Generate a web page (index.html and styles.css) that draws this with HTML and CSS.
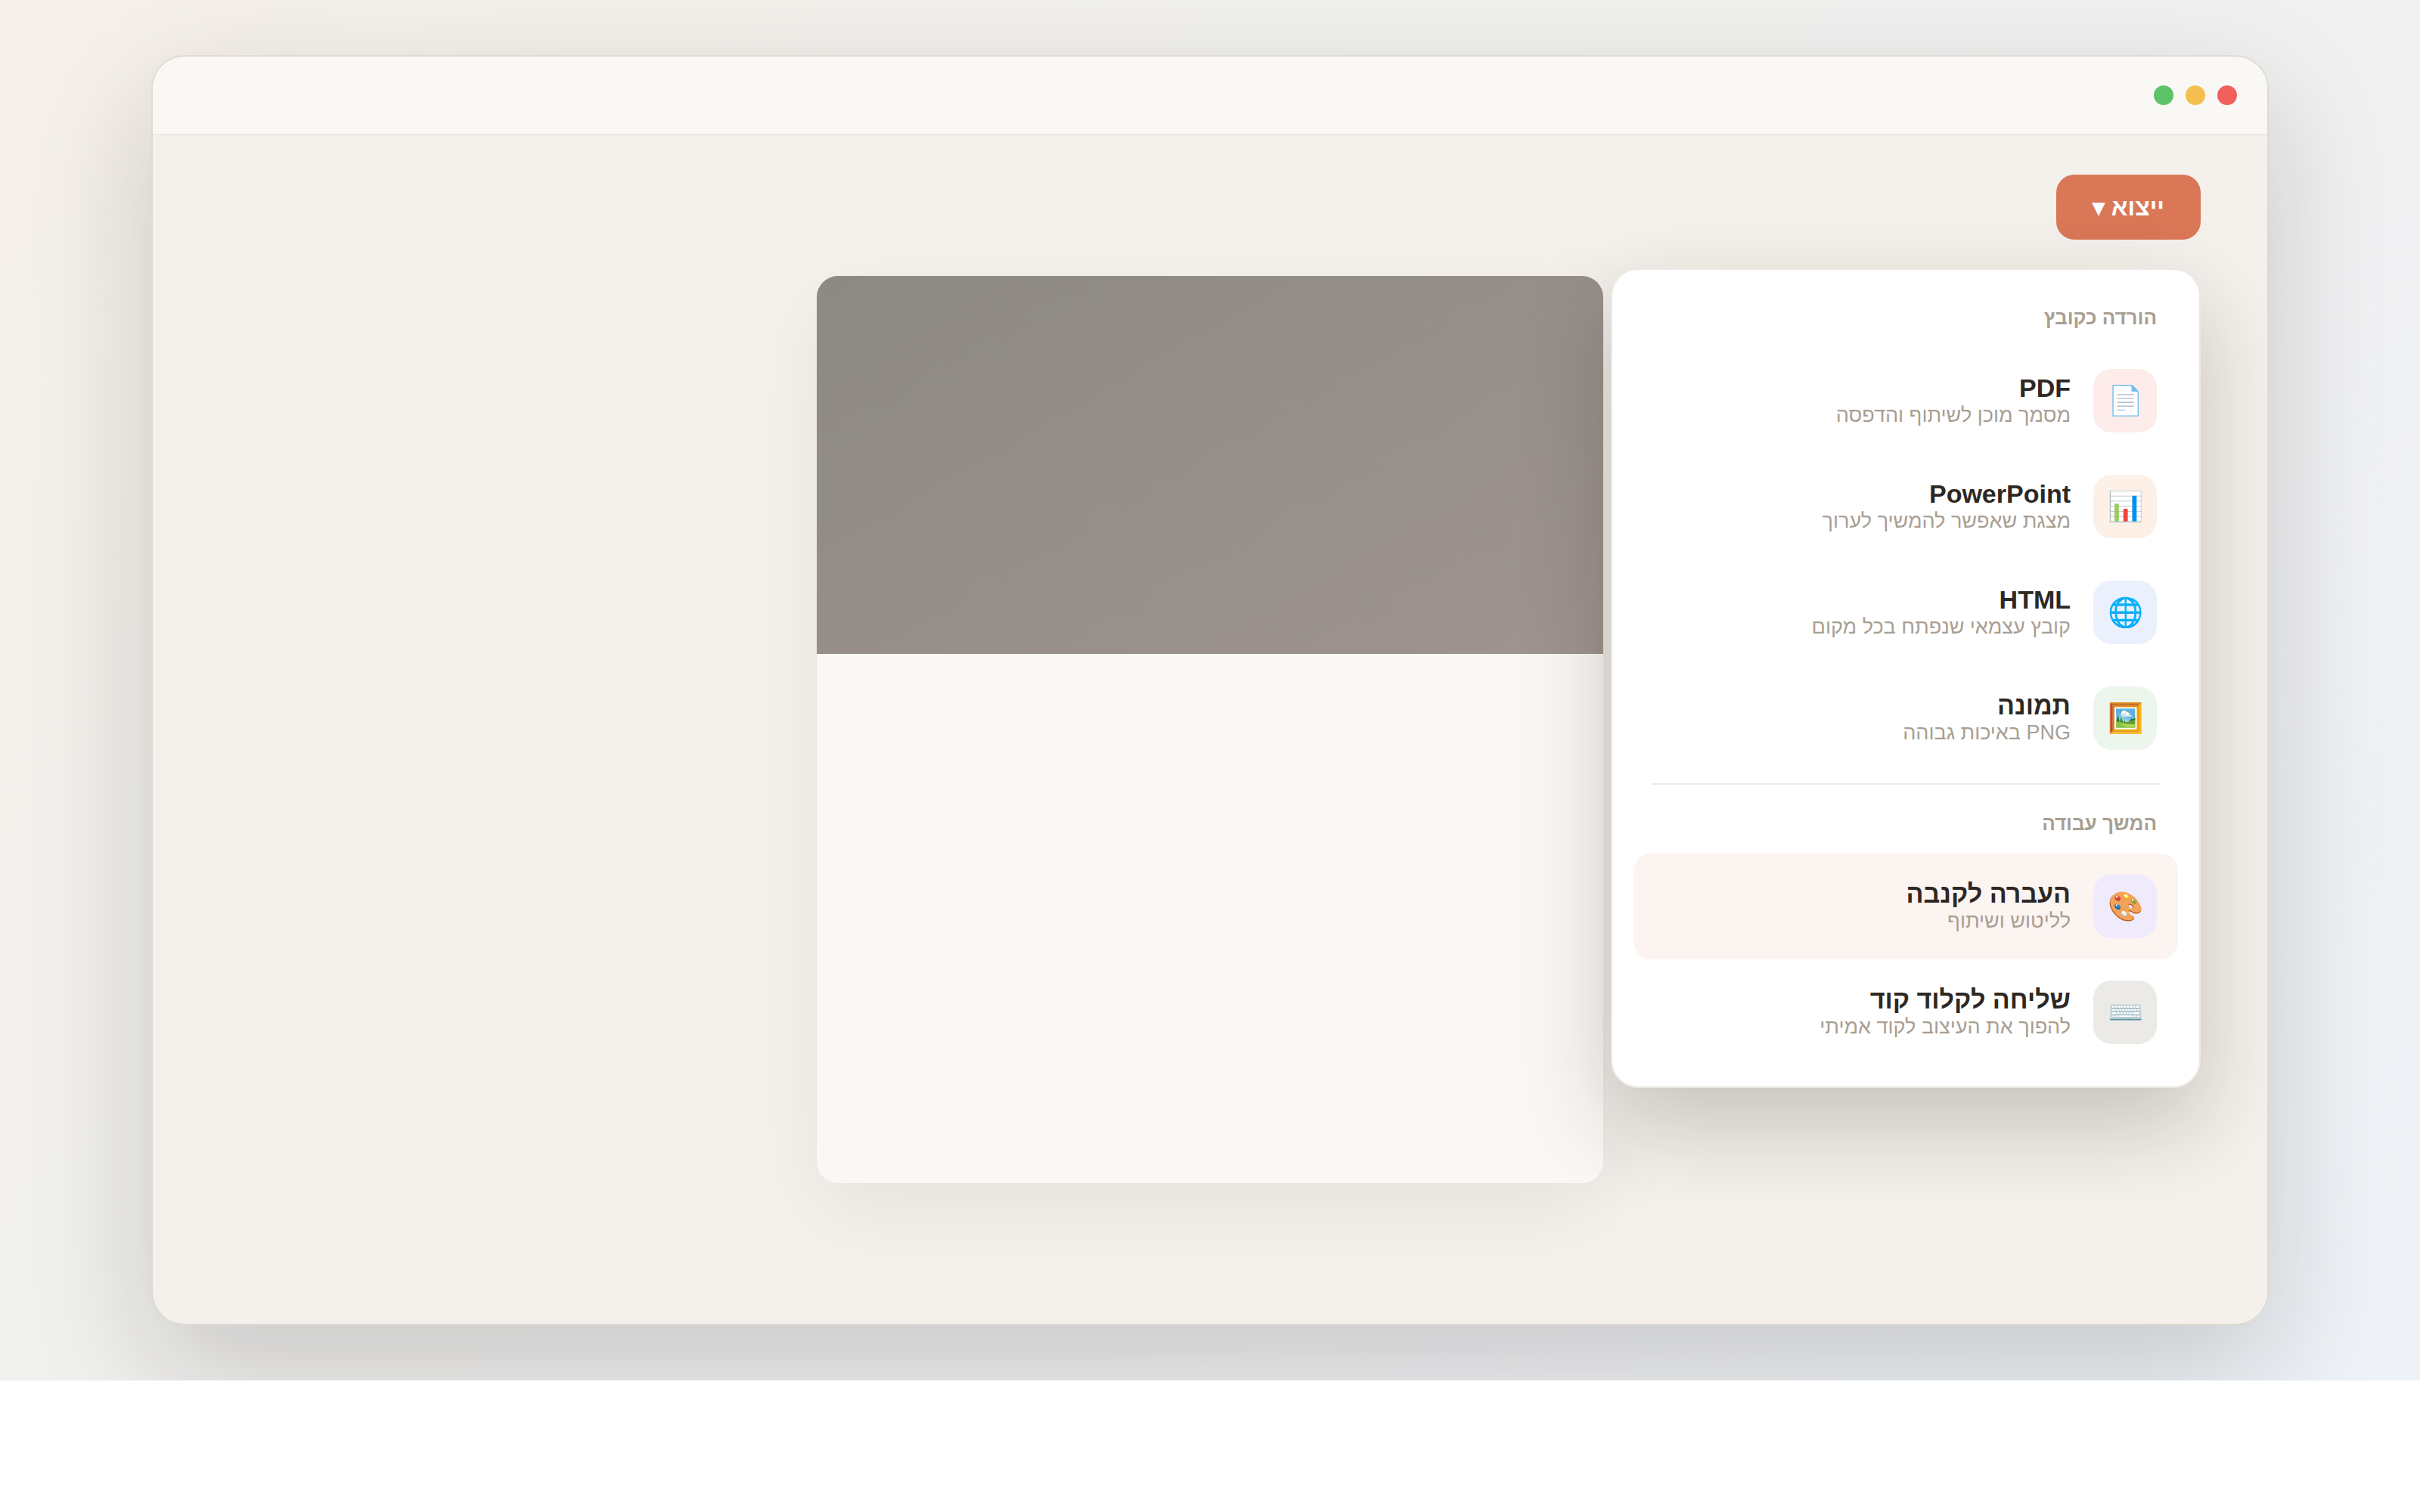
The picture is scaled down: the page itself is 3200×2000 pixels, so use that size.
FILE: index.html
```html
<!DOCTYPE html>
<html lang="he" dir="rtl">

<head>
  <meta charset="UTF-8">
  <meta name="viewport" content="width=device-width, initial-scale=1.0">
  <title>ייצוא</title>
  <link rel="stylesheet" href="styles.css">
</head>

<body>

  <div class="stage">
    <div class="window">

      <div class="titlebar">
        <span class="dot red"></span>
        <span class="dot yellow"></span>
        <span class="dot green"></span>
      </div>

      <div class="content">

        <div class="export">
          <button class="export-btn" type="button" aria-expanded="true">ייצוא ▾</button>

          <div class="menu">
            <div class="menu-label">הורדה כקובץ</div>
            <button class="item" type="button">
              <span class="icon pdf">📄</span>
              <span class="text"><b>PDF</b><small>מסמך מוכן לשיתוף והדפסה</small></span>
            </button>
            <button class="item" type="button">
              <span class="icon ppt">📊</span>
              <span class="text"><b>PowerPoint</b><small>מצגת שאפשר להמשיך לערוך</small></span>
            </button>
            <button class="item" type="button">
              <span class="icon web">🌐</span>
              <span class="text"><b>HTML</b><small>קובץ עצמאי שנפתח בכל מקום</small></span>
            </button>
            <button class="item" type="button">
              <span class="icon img">🖼️</span>
              <span class="text"><b>תמונה</b><small>PNG באיכות גבוהה</small></span>
            </button>

            <div class="divider"></div>

            <div class="menu-label">המשך עבודה</div>
            <button class="item active" type="button">
              <span class="icon canva">🎨</span>
              <span class="text"><b>העברה לקנבה</b><small>לליטוש ושיתוף</small></span>
            </button>
            <button class="item" type="button">
              <span class="icon code">⌨️</span>
              <span class="text"><b>שליחה לקלוד קוד</b><small>להפוך את העיצוב לקוד אמיתי</small></span>
            </button>
          </div>
        </div>

        <div class="poster">
          <div class="poster-top"></div>
        </div>

      </div>
    </div>
  </div>

</body>

</html>
```

FILE: styles.css
```css
* {
  box-sizing: border-box;
}

body {
  margin: 0;
  background: #fff;
  font-family: "Liberation Sans", Arial, sans-serif;
  color: #2d2823;
}

.stage {
  padding: 73px 200px;
  background: linear-gradient(135deg, #f5f0e8 0%, #f0f0ee 40%, #f0f0f1 65%, #edf2f7 100%);
  overflow: hidden;
}

.window {
  display: flex;
  flex-direction: column;
  min-height: 1680px;
  border: 2px solid #e0dad2;
  border-radius: 44px;
  background: #f4f0eb;
  overflow: hidden;
  box-shadow: 0 60px 160px rgba(20, 16, 18, 0.18);
}

/* title bar */
.titlebar {
  display: flex;
  align-items: center;
  gap: 16px;
  height: 104px;
  padding: 0 40px;
  background: #f9f8f4;
  border-bottom: 2px solid #ece9e3;
}

.dot {
  width: 26px;
  height: 26px;
  border-radius: 50%;
}

.red {
  background: #f1605c;
}

.yellow {
  background: #f6be4f;
}

.green {
  background: #5ec269;
}

.content {
  padding: 52px 88px;
}

/* export button and its menu */
.export {
  position: relative;
  width: fit-content;
}

.export-btn {
  display: block;
  height: 86px;
  padding: 0 48px;
  border: 0;
  border-radius: 24px;
  background: #d97757;
  color: #fff;
  font-family: inherit;
  font-size: 32px;
  font-weight: 700;
}

.menu {
  position: absolute;
  top: 124px;
  right: 0;
  z-index: 2;
  width: 780px;
  padding: 28px;
  border: 2px solid #ece9e3;
  border-radius: 36px;
  background: #fff;
  box-shadow: 0 48px 120px rgba(30, 28, 20, 0.22);
}

.menu-label {
  height: 75px;
  padding: 20px 28px 0;
  color: #a89e92;
  font-size: 26px;
  line-height: 30px;
  font-weight: 700;
}

.item {
  display: flex;
  align-items: center;
  gap: 30px;
  width: 100%;
  padding: 28px;
  border: 0;
  border-radius: 24px;
  background: none;
  color: inherit;
  font-family: inherit;
  text-align: right;
}

.active {
  background: #fcf4f1;
}

.icon {
  display: flex;
  align-items: center;
  justify-content: center;
  width: 84px;
  height: 84px;
  border-radius: 24px;
  font-size: 38px;
}

.pdf {
  background: #fdecea;
}

.ppt {
  background: #fdf0e6;
}

.web {
  background: #eaf0fc;
}

.img {
  background: #edf6ed;
}

.canva {
  background: #f0ebfc;
}

.code {
  background: #ebeae6;
}

.text b,
.text small {
  display: block;
}

.text b {
  font-size: 34px;
  line-height: 38px;
}

.text small {
  color: #a89e92;
  font-size: 27px;
  line-height: 34px;
}

.divider {
  height: 2px;
  margin: 16px 24px;
  background: #f0ebe6;
}

/* poster */
.poster {
  width: 1040px;
  height: 1200px;
  margin: 48px auto 0;
  border-radius: 28px;
  background: #f9f8f4;
  overflow: hidden;
  box-shadow: 0 36px 108px rgba(0, 0, 0, 0.06);
}

.poster-top {
  height: 500px;
  background: linear-gradient(150deg, #8d8984, #9f948e);
}
```
